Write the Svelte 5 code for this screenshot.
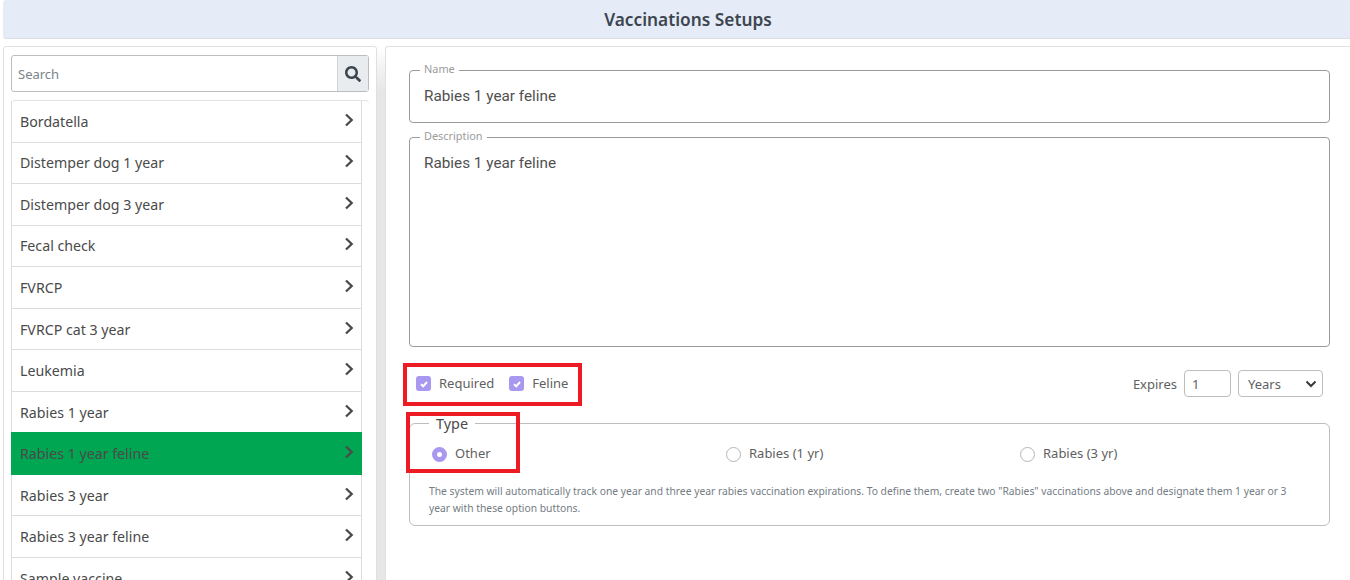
<script>
  const vaccines = [
    'Bordatella',
    'Distemper dog 1 year',
    'Distemper dog 3 year',
    'Fecal check',
    'FVRCP',
    'FVRCP cat 3 year',
    'Leukemia',
    'Rabies 1 year',
    'Rabies 1 year feline',
    'Rabies 3 year',
    'Rabies 3 year feline',
    'Sample vaccine'
  ];
  const selected = 'Rabies 1 year feline';
</script>

<div class="page">
  <h1 class="title">Vaccinations Setups</h1>

  <div class="columns">
    <aside class="side">
      <div class="search">
        <input class="search-input" placeholder="Search" />
        <span class="search-btn">
          <svg width="16" height="16" viewBox="0 0 512 512"><path fill="#3c4650" d="M505 442.700L405.300 343c-4.500-4.500-10.600-7-17-7H372c27.600-35.300 44-79.700 44-128C416 93.100 322.900 0 208 0S0 93.100 0 208s93.100 208 208 208c48.300 0 92.700-16.400 128-44v16.300c0 6.400 2.500 12.500 7 17l99.700 99.700c9.400 9.400 24.600 9.400 33.900 0l28.300-28.300c9.400-9.400 9.400-24.600.1-34zM208 336c-70.700 0-128-57.200-128-128 0-70.700 57.200-128 128-128 70.700 0 128 57.200 128 128 0 70.700-57.200 128-128 128z"/></svg>
        </span>
      </div>

      <div class="list-wrap">
        <ul class="list">
          {#each vaccines as name}
            <li class="row" class:active={name === selected}>
              <span>{name}</span>
              <svg class="chev" width="10" height="14" viewBox="0 0 10 14"><path d="M2 1.500 L7.700 7 L2 12.500" fill="none" stroke="currentColor" stroke-width="2.300"/></svg>
            </li>
          {/each}
        </ul>
      </div>
    </aside>

    <main class="detail">
      <fieldset class="field name-field">
        <legend>Name</legend>
        <span>Rabies 1 year feline</span>
      </fieldset>
      <fieldset class="field desc-field">
        <legend>Description</legend>
        <span>Rabies 1 year feline</span>
      </fieldset>

      <div class="options">
        <div class="checks">
          <label class="check"><span class="box">
            <svg width="10" height="10" viewBox="0 0 10 10"><path d="M2 5.200 L4.200 7.300 L8 3" fill="none" stroke="#fff" stroke-width="2"/></svg>
          </span><span class="lbl">Required</span></label>
          <label class="check"><span class="box">
            <svg width="10" height="10" viewBox="0 0 10 10"><path d="M2 5.200 L4.200 7.300 L8 3" fill="none" stroke="#fff" stroke-width="2"/></svg>
          </span><span class="lbl">Feline</span></label>
        </div>
        <div class="expires">
          <span>Expires</span>
          <span class="num">1</span>
          <span class="unit">Years
            <svg width="12" height="8" viewBox="0 0 12 8"><path d="M1.500 1.500 L6 6 L10.500 1.500" fill="none" stroke="#343a40" stroke-width="2"/></svg>
          </span>
        </div>
      </div>

      <fieldset class="type">
        <legend>Type</legend>
        <div class="radios">
          <label class="radio"><span class="dot on"></span><span class="lbl">Other</span></label>
          <label class="radio"><span class="dot"></span><span class="lbl">Rabies (1 yr)</span></label>
          <label class="radio"><span class="dot"></span><span class="lbl">Rabies (3 yr)</span></label>
        </div>
        <p class="note">The system will automatically track one year and three year rabies vaccination expirations. To define them, create two "Rabies" vaccinations above and designate them 1 year or 3 year with these option buttons.</p>
      </fieldset>

      <div class="mark mark-checks"></div>
      <div class="mark mark-type"></div>
    </main>
  </div>
</div>

<style>
  :global(body) {
    margin: 0;
    background: #fff;
  }

  .page {
    height: 580px;
    overflow: hidden;
    padding-left: 3px;
    box-sizing: border-box;
    font-family: "Noto Sans", sans-serif;
    color: #4a4a4a;
  }

  .title {
    margin: 0;
    height: 38px;
    line-height: 39px;
    padding-left: 23px;
    text-align: center;
    font-size: 17.300px;
    font-weight: 600;
    color: #3d4650;
    background: #e6ecf7;
    border-bottom: 1px solid #d9dee6;
    border-radius: 3px 0 0 3px;
  }

  .columns {
    display: flex;
    margin-top: 7px;
    height: 540px;
    background: linear-gradient(#fff, #e6e6e6 45px);
  }

  .side {
    width: 374px;
    flex: none;
    box-sizing: border-box;
    background: #fff;
    border: 1px solid #e0e0e0;
    border-radius: 3px 3px 0 0;
    padding: 8px 7px 0;
  }

  .search {
    display: flex;
    width: 358px;
    height: 37px;
    box-sizing: border-box;
    border: 1px solid #bdbdbd;
    border-radius: 3px;
  }

  .search-input {
    flex: 1;
    min-width: 0;
    border: 0;
    outline: 0;
    padding: 0 6px;
    font: 13px "Noto Sans", sans-serif;
    color: #495057;
    background: transparent;
  }

  .search-input::placeholder {
    color: #7b838a;
  }

  .search-btn {
    width: 30px;
    display: flex;
    align-items: center;
    justify-content: center;
    background: #e9ecef;
    border-left: 1px solid #ced4da;
  }

  .list-wrap {
    width: 358px;
    margin-top: 8px;
    border-top: 1px solid #e2e2e2;
    border-radius: 4px 4px 0 0;
  }

  .list {
    list-style: none;
    margin: 0;
    padding: 0;
    width: 349px;
    border: 1px solid #dcdcdc;
    border-width: 0 1px;
  }

  .row {
    display: flex;
    align-items: center;
    justify-content: space-between;
    height: 40.550px;
    padding: 0 7px 0 8px;
    border-bottom: 1px solid #dcdcdc;
    font-size: 14.200px;
    color: #4a4a4a;
  }

  .row.active {
    background: #00a651;
    margin: -1px -1px 0;
    padding: 1px 8px 0 9px;
    border-bottom-color: #00a651;
  }

  .chev {
    margin-top: -3px;
  }

  .detail {
    position: relative;
    flex: 1;
    margin-left: 8px;
    background: #fff;
    border-top: 1px solid #e0e0e0;
    border-left: 1px solid #e0e0e0;
    border-radius: 3px 0 0 0;
    padding: 14px 20px 0 23px;
    font-family: Roboto, sans-serif;
    font-size: 15.300px;
    color: #505050;
  }

  .field {
    margin: 0;
    border: 1px solid #9a9a9a;
    border-radius: 4px;
    padding: 0 14px;
    min-width: 0;
  }

  .field legend {
    margin-left: -4px;
    padding: 0 4px 4px;
    font-family: "Noto Sans", sans-serif;
    font-size: 10.900px;
    color: #9b9b9b;
  }

  .name-field {
    height: 62px;
    box-sizing: border-box;
  }

  .name-field span, .desc-field span {
    display: block;
    padding-top: 7px;
  }

  .desc-field {
    margin-top: 5px;
    height: 219px;
    box-sizing: border-box;
  }

  .options {
    display: flex;
    justify-content: space-between;
    align-items: center;
    margin-top: 11px;
    padding: 0 7px;
    height: 51px;
    font-family: "Noto Sans", sans-serif;
    font-size: 13px;
    color: #5f5f5f;
  }

  .checks {
    display: flex;
    gap: 15px;
  }

  .check {
    display: flex;
    align-items: center;
    gap: 8px;
  }

  .lbl {
    margin-bottom: 2px;
  }

  .box {
    width: 15px;
    height: 15px;
    border-radius: 3px;
    background: #a898f0;
    display: flex;
    align-items: center;
    justify-content: center;
  }

  .expires {
    display: flex;
    align-items: center;
    gap: 7px;
  }

  .num, .unit {
    height: 27px;
    box-sizing: border-box;
    border: 1px solid #bdbdbd;
    border-radius: 4px;
    display: flex;
    align-items: center;
    padding-left: 7px;
  }

  .num {
    width: 47px;
  }

  .unit {
    width: 85px;
    justify-content: space-between;
    padding: 0 5px 0 9px;
  }

  .type {
    margin: 8px 0 0;
    border: 1px solid #bdbdbd;
    border-radius: 6px;
    padding: 0 19px;
    height: 109px;
    box-sizing: border-box;
    min-width: 0;
    font-family: "Noto Sans", sans-serif;
  }

  .type legend {
    margin-left: 0;
    padding: 0 7px;
    font-size: 14.400px;
    color: #4a4a4a;
    line-height: 13px;
  }

  .radios {
    display: grid;
    grid-template-columns: 294px 294px 1fr;
    margin-top: 14px;
    padding-left: 3px;
    font-size: 13px;
    color: #5f5f5f;
  }

  .radio {
    display: flex;
    align-items: center;
    gap: 8px;
  }

  .dot {
    width: 15px;
    height: 15px;
    box-sizing: border-box;
    border-radius: 50%;
    border: 1px solid #b5b5b5;
    background: #fff;
  }

  .dot.on {
    border: 5px solid #a898f0;
  }

  .note {
    margin: 19px 0 0;
    font-size: 10.300px;
    line-height: 16.800px;
    color: #747c84;
  }

  .mark {
    position: absolute;
    box-sizing: border-box;
    border: 4px solid #ed1c24;
    pointer-events: none;
  }

  .mark-checks {
    left: 17px;
    top: 316px;
    width: 179px;
    height: 43px;
  }

  .mark-type {
    left: 20px;
    top: 365px;
    width: 114px;
    height: 61px;
  }
</style>
